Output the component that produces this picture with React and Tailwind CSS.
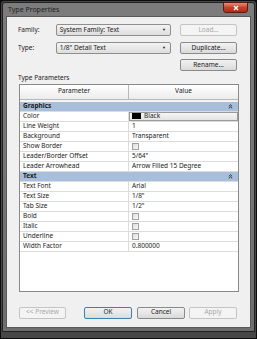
import React from "react";

const font = { fontFamily: '"Noto Sans", "Open Sans", Arial, sans-serif' };

function Btn({ children, w = "w-[57px]", disabled = false, def = false }) {
  return (
    <div
      className={`${w} h-[12px] flex items-center justify-center rounded-[2px] border text-[6.5px] leading-none ${
        disabled
          ? "border-[#c4c4c4] bg-[#f4f4f4] text-[#a8a8a8]"
          : def
          ? "border-[#3c7fb1] bg-gradient-to-b from-[#f2f2f2] to-[#dcdcdc] text-[#222]"
          : "border-[#8a8a8a] bg-gradient-to-b from-[#f2f2f2] to-[#dadada] text-[#222]"
      }`}
    >
      {children}
    </div>
  );
}

function Combo({ text }) {
  return (
    <div className="w-[116px] h-[12px] flex items-center rounded-[2px] border border-[#8e8e8e] bg-gradient-to-b from-[#f3f3f3] to-[#dedede] pl-[3px] pr-[4px] text-[6.5px] leading-none text-[#222]">
      <span className="flex-1">{text}</span>
      <span className="text-[4px] text-[#222]">▼</span>
    </div>
  );
}

function Check() {
  return <div className="w-[7px] h-[7px] border border-[#a0a0a0] bg-gradient-to-br from-[#dcdcdc] to-[#fafafa]" />;
}

function Row({ name, value }) {
  return (
    <div className="flex h-[10px] border-b border-[#dcdcdc] text-[6.5px] leading-none text-[#222]">
      <div className="w-[109px] border-r border-[#dcdcdc] flex items-center pl-[3px]">{name}</div>
      <div className="flex-1 flex items-center pl-[3px]">{value}</div>
    </div>
  );
}

function Group({ name }) {
  return (
    <div className="flex h-[10px] items-center bg-[#a8bfdc] border-b border-[#dcdcdc] pl-[3px] pr-[5px] text-[6.5px] font-bold leading-none text-[#1a1a1a]">
      <span className="flex-1">{name}</span>
      <svg width="5" height="5" viewBox="0 0 5 5">
        <path d="M0.8 2.4 L2.5 0.8 L4.2 2.4 M0.8 4.4 L2.5 2.8 L4.2 4.4" stroke="#222" strokeWidth="0.9" fill="none" />
      </svg>
    </div>
  );
}

export default function App() {
  return (
    <div style={font} className="w-[257px] h-[339px] bg-[#0c0c0c] p-[1px]">
      <div className="w-full h-full bg-[#474747] p-[1px] rounded-t-[3px]">
        <div className="w-full h-[330px] flex flex-col bg-gradient-to-b from-[#7c7c7c] to-[#6e6e6e] rounded-t-[3px] border border-[#222]">
          <div className="h-[12px] flex items-start relative">
            <span className="pl-[5px] pt-[3px] text-[7px] leading-none text-[#1e1e1e]">Type Properties</span>
            <div className="absolute right-[6px] top-[-1px] w-[25px] h-[11px] rounded-b-[3px] border border-[#5a1b14] bg-gradient-to-b from-[#e88a78] via-[#c8402a] to-[#b22a17] flex items-center justify-center">
              <svg width="6" height="6" viewBox="0 0 6 6">
                <path d="M1 1 L5 5 M5 1 L1 5" stroke="#fff" strokeWidth="1.4" />
              </svg>
            </div>
          </div>
          <div className="flex-1 mx-[3px] mb-[3px] mt-[1px] border border-[#5a5a5a] bg-[#f0f0f0] flex flex-col pl-[11px] pr-[13px]">
            <div className="mt-[7px] flex items-center">
              <span className="w-[38px] text-[6.5px] leading-none text-[#222]">Family:</span>
              <Combo text="System Family: Text" />
              <div className="ml-[9px]"><Btn disabled>Load...</Btn></div>
            </div>
            <div className="mt-[6px] flex items-center">
              <span className="w-[38px] text-[6.5px] leading-none text-[#222]">Type:</span>
              <Combo text={"1/8\" Detail Text"} />
              <div className="ml-[9px]"><Btn>Duplicate...</Btn></div>
            </div>
            <div className="mt-[5px] flex justify-end">
              <Btn>Rename...</Btn>
            </div>
            <div className="mt-[4px] text-[6.5px] leading-none text-[#222]">Type Parameters</div>
            <div className="mt-[2px] ml-[1px] mr-[-2px] h-[208px] border border-[#8a8a8a] bg-white flex flex-col">
              <div className="flex h-[15px] bg-gradient-to-b from-[#ffffff] to-[#ececec] border-b border-[#b8b8b8] text-[6.5px] leading-none text-[#222]">
                <div className="w-[109px] border-r border-[#b8b8b8] flex items-center justify-center">Parameter</div>
                <div className="flex-1 flex items-center justify-center">Value</div>
              </div>
              <div className="h-[2px] bg-[#f4f4f4]" />
              <Group name="Graphics" />
              <div className="flex h-[10px] border-b border-[#dcdcdc] text-[6.5px] leading-none text-[#222]">
                <div className="w-[109px] border-r border-[#dcdcdc] flex items-center pl-[3px]">Color</div>
                <div className="flex-1 flex items-center pl-[2px] border border-[#9a9a9a] bg-gradient-to-b from-[#f6f6f6] to-[#e4e4e4]">
                  <div className="w-[9px] h-[6px] bg-black mr-[3px]" />
                  Black
                </div>
              </div>
              <Row name="Line Weight" value="1" />
              <Row name="Background" value="Transparent" />
              <Row name="Show Border" value={<Check />} />
              <Row name="Leader/Border Offset" value={"5/64\""} />
              <Row name="Leader Arrowhead" value="Arrow Filled 15 Degree" />
              <Group name="Text" />
              <Row name="Text Font" value="Arial" />
              <Row name="Text Size" value={"1/8\""} />
              <Row name="Tab Size" value={"1/2\""} />
              <Row name="Bold" value={<Check />} />
              <Row name="Italic" value={<Check />} />
              <Row name="Underline" value={<Check />} />
              <Row name="Width Factor" value="0.800000" />
            </div>
            <div className="mt-[15px] ml-[1px] flex items-center">
              <Btn w="w-[48px]" disabled>&lt;&lt; Preview</Btn>
              <div className="ml-[18px]"><Btn w="w-[48px]" def>OK</Btn></div>
              <div className="ml-[5px]"><Btn w="w-[48px]">Cancel</Btn></div>
              <div className="ml-[4px]"><Btn w="w-[48px]" disabled>Apply</Btn></div>
            </div>
          </div>
        </div>
      </div>
    </div>
  );
}
